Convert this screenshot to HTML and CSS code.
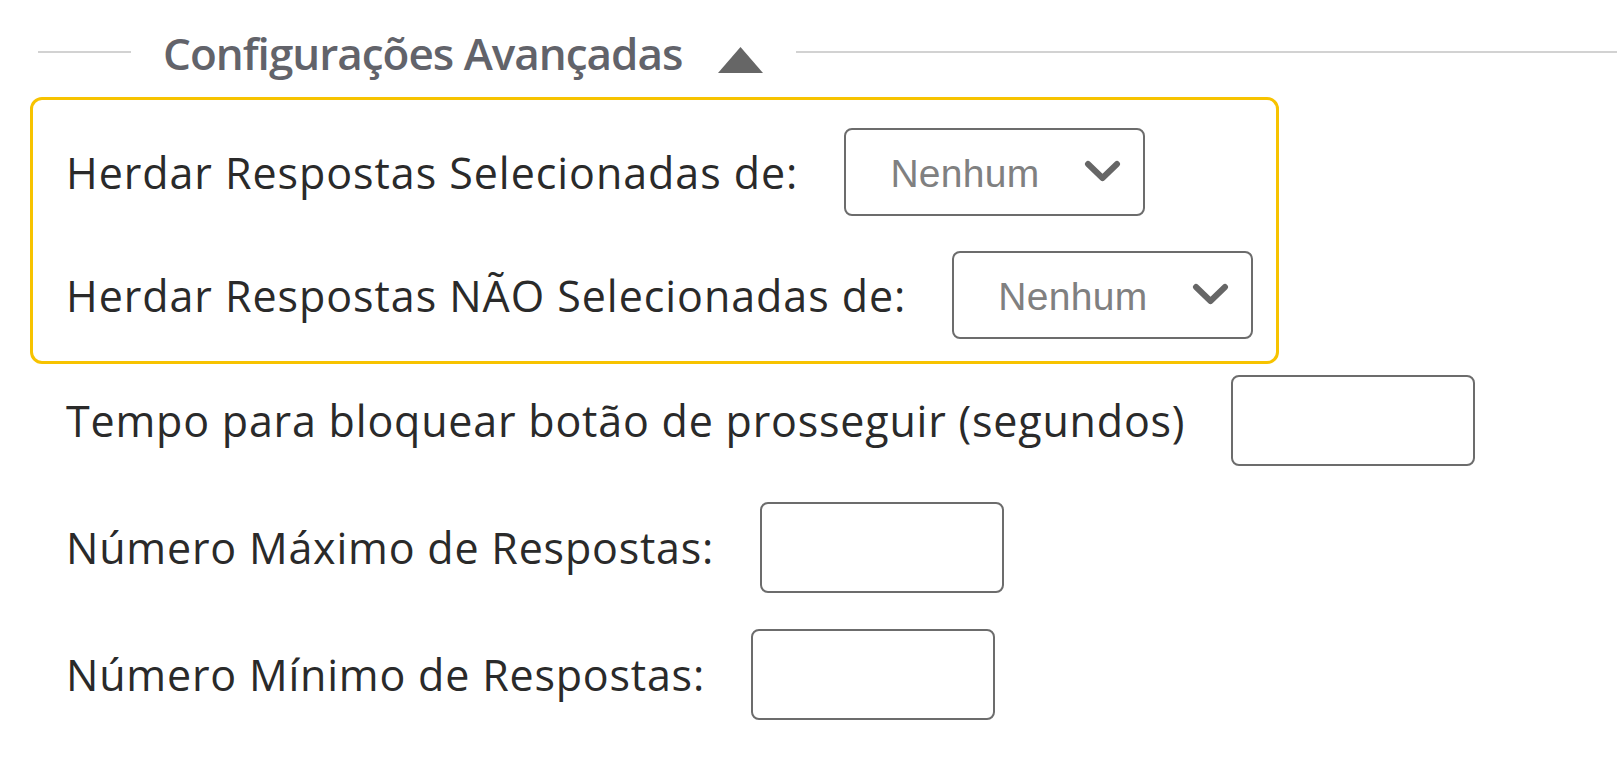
FILE: index.html
```html
<!DOCTYPE html>
<html lang="pt-BR">
<head>
<meta charset="utf-8">
<title>Configurações Avançadas</title>
<link rel="stylesheet" href="styles.css">
</head>
<body>
<section class="advanced">
  <div class="legend">
    <span class="legend-line legend-line-left"></span>
    <span class="legend-title">Configurações Avançadas</span>
    <svg class="legend-toggle" viewBox="0 0 45 26" width="45" height="26" aria-hidden="true">
      <polygon points="22.5,0 45,26 0,26" fill="#666"/>
    </svg>
    <span class="legend-line legend-line-right"></span>
  </div>

  <div class="highlight">
    <div class="row">
      <label class="label">Herdar Respostas Selecionadas de:</label>
      <div class="select">
        <span class="select-value">Nenhum</span>
        <svg class="chevron" viewBox="0 0 37 22" width="37" height="22" aria-hidden="true">
          <path d="M4 4 L18.5 18 L33 4" fill="none" stroke="#666" stroke-width="6" stroke-linecap="round" stroke-linejoin="round"/>
        </svg>
      </div>
    </div>
    <div class="row row-second">
      <label class="label">Herdar Respostas NÃO Selecionadas de:</label>
      <div class="select">
        <span class="select-value">Nenhum</span>
        <svg class="chevron" viewBox="0 0 37 22" width="37" height="22" aria-hidden="true">
          <path d="M4 4 L18.5 18 L33 4" fill="none" stroke="#666" stroke-width="6" stroke-linecap="round" stroke-linejoin="round"/>
        </svg>
      </div>
    </div>
  </div>

  <div class="fields">
    <div class="row row-tempo">
      <label class="label">Tempo para bloquear botão de prosseguir (segundos)</label>
      <input class="text-input" type="text">
    </div>
    <div class="row row-max">
      <label class="label">Número Máximo de Respostas:</label>
      <input class="text-input" type="text">
    </div>
    <div class="row row-min">
      <label class="label">Número Mínimo de Respostas:</label>
      <input class="text-input" type="text">
    </div>
  </div>
</section>
</body>
</html>
```

FILE: styles.css
```css
html, body {
  margin: 0;
  padding: 0;
  background: #ffffff;
}

body {
  font-family: "Open Sans", "Noto Sans", sans-serif;
  color: #2a2a2a;
}

.advanced {
  padding-top: 23px;
}

.legend {
  display: flex;
  align-items: center;
  height: 60px;
  padding-left: 38px;
}

.legend-line {
  height: 2px;
  background: #d2d2d2;
  margin-top: -3px;
}

.legend-line-left {
  width: 93px;
}

.legend-line-right {
  flex: 1;
  margin-left: 33px;
}

.legend-title {
  margin-left: 32px;
  font-size: 44px;
  line-height: 60px;
  font-weight: 600;
  letter-spacing: -1px;
  color: #62636a;
  white-space: nowrap;
}

.legend-toggle {
  margin-left: 36px;
  margin-top: 14px;
  flex: none;
}

.highlight {
  box-sizing: border-box;
  width: 1249px;
  margin: 14px 0 0 30px;
  padding: 28px 0 22px 33px;
  border: 3px solid #f7c300;
  border-radius: 12px;
}

.row {
  display: flex;
  align-items: center;
}

.row-second {
  margin-top: 35px;
}

.label {
  font-size: 43px;
  letter-spacing: 0.95px;
  color: #2a2a2a;
  white-space: nowrap;
  margin-right: 46px;
}

.fields .label {
  letter-spacing: 0.8px;
}

.select {
  box-sizing: border-box;
  width: 301px;
  height: 88px;
  display: flex;
  align-items: center;
  justify-content: space-between;
  padding: 4px 22px 0 44px;
  border: 2px solid #6c6c6c;
  border-radius: 8px;
  background: #fff;
}

.select-value {
  font-family: "Liberation Sans", Arial, sans-serif;
  font-size: 39px;
  letter-spacing: 0.3px;
  color: #808080;
}

.chevron {
  flex: none;
  margin-top: -6px;
}

.fields {
  padding-left: 66px;
}

.row-tempo {
  margin-top: 11px;
}

.row-max,
.row-min {
  margin-top: 36px;
}

.text-input {
  box-sizing: border-box;
  width: 244px;
  height: 91px;
  margin: 0;
  padding: 0 12px;
  border: 2px solid #6c6c6c;
  border-radius: 8px;
  background: #fff;
  font-family: "Open Sans", sans-serif;
  font-size: 38px;
  outline: none;
}
```
